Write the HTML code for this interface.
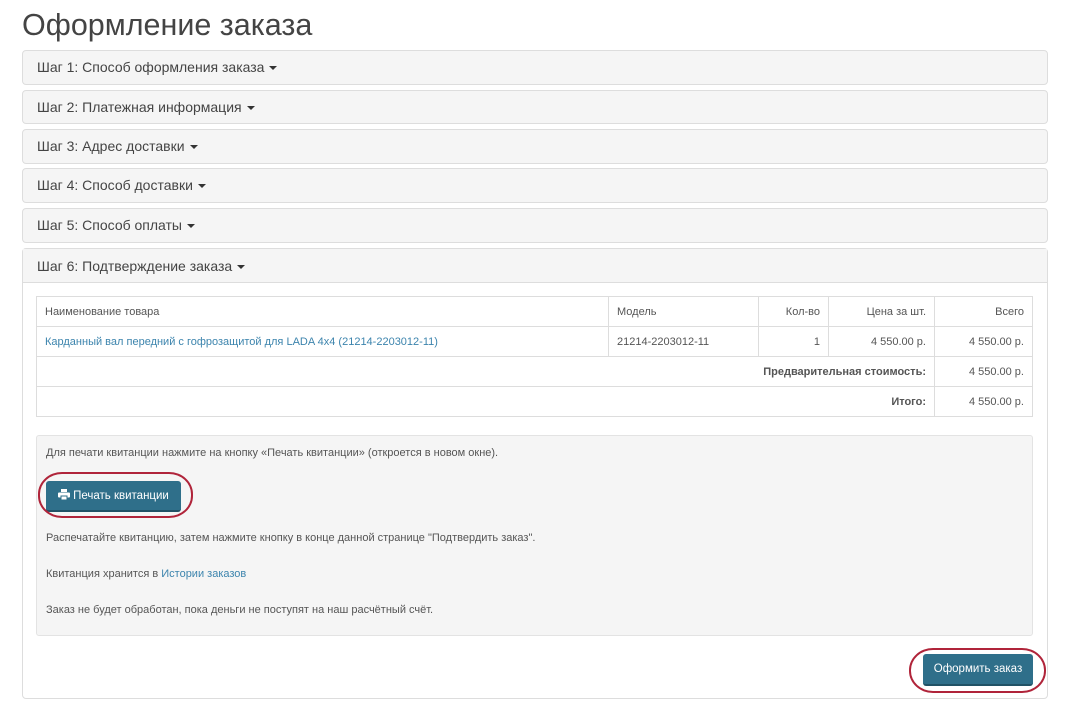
<!DOCTYPE html>
<html><head><meta charset="utf-8"><style>
*{box-sizing:border-box;margin:0;padding:0}
body{width:1068px;height:708px;background:#fff;font-family:"Liberation Sans","DejaVu Sans",sans-serif;color:#444;position:relative;overflow:hidden}
h1{position:absolute;left:22px;top:8px;font-size:30.5px;font-weight:normal;color:#444}
.p{position:absolute;left:22px;width:1026px;border:1px solid #ddd;border-radius:4px;background:#f5f5f5}
.p .h{height:33px;line-height:33px;padding-left:14px;font-size:14px;color:#444}
.car{display:inline-block;width:0;height:0;border-left:4px solid transparent;border-right:4px solid transparent;border-top:4px solid #333;vertical-align:middle;margin-left:5px}
.abs{position:absolute}
table{position:absolute;left:36px;top:296px;width:997px;border-collapse:collapse;font-size:11px}
td{border:1px solid #ddd;height:30px;padding:0 8px;color:#555}
.r{text-align:right}
a{color:#3c84ad;text-decoration:none}
.box{position:absolute;left:36px;top:435px;width:997px;height:201px;background:#f5f5f5;border:1px solid #e3e3e3;border-radius:3px;font-size:11px;color:#555}
.box div{position:absolute;left:9px}
.btn{background:#2f6f8a;color:#fff;border-radius:3px;font-size:11.5px;text-align:center;border-bottom:2px solid #215266}
.ell{position:absolute;border:2.5px solid #b0243a;border-radius:24px/22px}
</style></head><body>
<h1>Оформление заказа</h1>
<div class="p" style="top:50px;height:35px"><div class="h">Шаг 1: Способ оформления заказа<span class="car"></span></div></div>
<div class="p" style="top:90px;height:34px"><div class="h">Шаг 2: Платежная информация<span class="car"></span></div></div>
<div class="p" style="top:129px;height:35px"><div class="h">Шаг 3: Адрес доставки<span class="car"></span></div></div>
<div class="p" style="top:168px;height:35px"><div class="h">Шаг 4: Способ доставки<span class="car"></span></div></div>
<div class="p" style="top:208px;height:35px"><div class="h">Шаг 5: Способ оплаты<span class="car"></span></div></div>
<div class="p" style="top:248px;height:451px;background:#fff"><div class="h" style="background:#f5f5f5;border-bottom:1px solid #ddd;height:34px;line-height:34px">Шаг 6: Подтверждение заказа<span class="car"></span></div></div>
<table>
<tr><td style="width:572px">Наименование товара</td><td style="width:150px">Модель</td><td class="r" style="width:70px">Кол-во</td><td class="r" style="width:106px">Цена за шт.</td><td class="r">Всего</td></tr>
<tr><td><a>Карданный вал передний с гофрозащитой для LADA 4x4 (21214-2203012-11)</a></td><td>21214-2203012-11</td><td class="r">1</td><td class="r">4 550.00 р.</td><td class="r">4 550.00 р.</td></tr>
<tr><td colspan="4" class="r"><b>Предварительная стоимость:</b></td><td class="r">4 550.00 р.</td></tr>
<tr><td colspan="4" class="r"><b>Итого:</b></td><td class="r">4 550.00 р.</td></tr>
</table>
<div class="box">
<div style="top:11px">Для печати квитанции нажмите на кнопку «Печать квитанции» (откроется в новом окне).</div>
<div class="btn" style="top:45px;width:135px;height:31px;line-height:30px"><svg width="12" height="11" viewBox="0 0 12 11" style="vertical-align:-1px;margin-right:3px"><rect x="3" y="0" width="6" height="3" fill="#fff"/><rect x="0" y="3.5" width="12" height="5" rx="1" fill="#fff"/><rect x="3" y="7" width="6" height="4" fill="#fff" stroke="#2f6f8a" stroke-width="1"/></svg>Печать квитанции</div>
<div style="top:96px">Распечатайте квитанцию, затем нажмите кнопку в конце данной странице "Подтвердить заказ".</div>
<div style="top:132px">Квитанция хранится в <a>Истории заказов</a></div>
<div style="top:168px">Заказ не будет обработан, пока деньги не поступят на наш расчётный счёт.</div>
</div>
<div class="ell" style="left:38px;top:472px;width:155px;height:46px"></div>
<div class="btn abs" style="left:923px;top:654px;width:110px;height:32px;line-height:31px">Оформить заказ</div>
<div class="ell" style="left:909px;top:648px;width:137px;height:45px"></div>
</body></html>
